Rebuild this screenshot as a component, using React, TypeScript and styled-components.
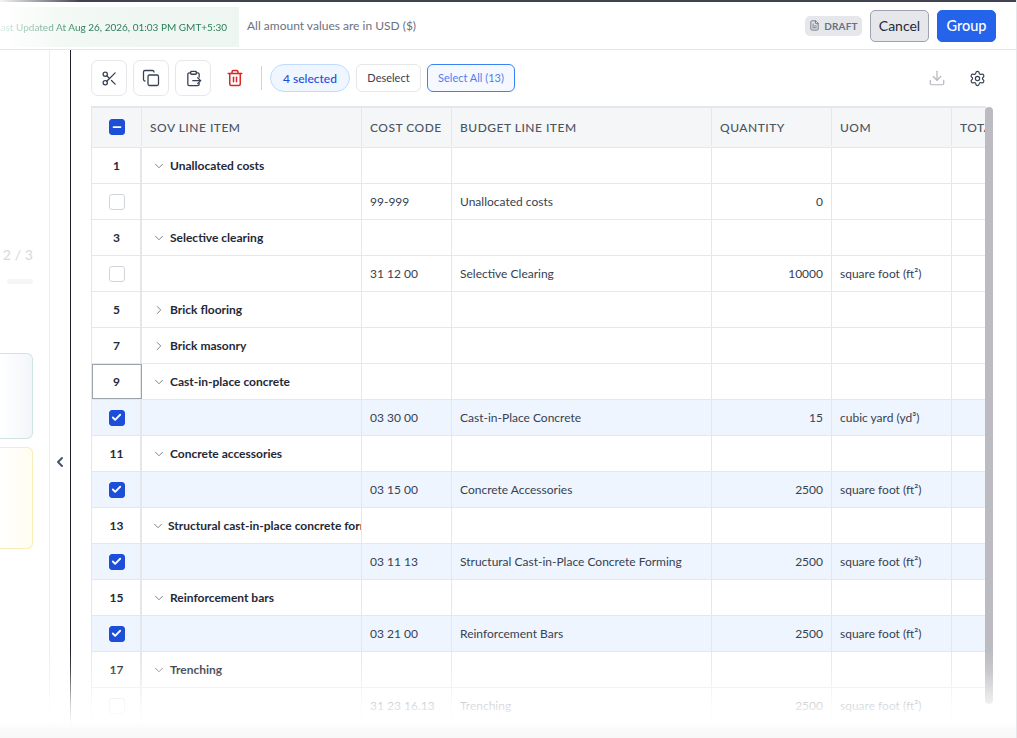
import React from "react";
import styled, { createGlobalStyle } from "styled-components";
import { Scissors, Copy, Trash2, Download, Settings, FileText, ChevronDown, ChevronRight, ChevronLeft, Check, Minus } from "lucide-react";

const Global = createGlobalStyle`
  html, body { margin: 0; padding: 0; background: #fff; }
  body { font-family: Lato, "Liberation Sans", sans-serif; overflow: hidden; }
  * { box-sizing: border-box; }
`;

const Page = styled.div`
  position: relative;
  width: 1017px;
  height: 738px;
  display: flex;
  flex-direction: column;
  overflow: hidden;
  border-right: 1px solid #e5e7eb;
  background: #fff;
`;
const TopStripe = styled.div`
  height: 2px;
  flex: none;
  background: linear-gradient(90deg, #f3f4f6 0, #9a9ca3 40px, #3f4350 80px, #3f4350 100%);
`;
const TopBar = styled.header`
  height: 48px;
  flex: none;
  display: flex;
  align-items: center;
  padding-right: 20px;
  border-bottom: 1px solid #e5e7eb;
`;
const Banner = styled.div`
  width: 239px;
  height: 40px;
  margin-top: 2px;
  display: flex;
  align-items: center;
  justify-content: flex-end;
  padding-right: 12px;
  white-space: nowrap;
  overflow: hidden;
  font-size: 10px;
  color: #2a7f5a;
  background: linear-gradient(90deg, #ffffff 0, #f2f8f4 70px, #eef6f1 100%);
`;
const BannerText = styled.span`
  -webkit-mask-image: linear-gradient(90deg, rgba(0,0,0,.1) 0, rgba(0,0,0,.55) 50px, #000 90px);
  mask-image: linear-gradient(90deg, rgba(0,0,0,.1) 0, rgba(0,0,0,.55) 50px, #000 90px);
`;
const Note = styled.span`
  margin-left: 8px;
  font-size: 12px;
  color: #6b7280;
`;
const Spacer = styled.div`
  flex: 1;
`;
const DraftBadge = styled.span`
  display: flex;
  align-items: center;
  gap: 4px;
  height: 20px;
  width: 57px;
  justify-content: center;
  border-radius: 5px;
  background: #e5e7eb;
  color: #6b7280;
  font-size: 10px;
  font-weight: 700;
  letter-spacing: 0.2px;
`;
const ActionButton = styled.button<{ $primary?: boolean }>`
  width: 59px;
  height: 32px;
  margin-left: 8px;
  border-radius: 5px;
  font-family: Lato, sans-serif;
  font-size: ${(p) => (p.$primary ? "14.5px" : "14px")};
  font-weight: ${(p) => (p.$primary ? 500 : 400)};
  color: ${(p) => (p.$primary ? "#fff" : "#1f2937")};
  background: ${(p) => (p.$primary ? "#2563eb" : "#e5e7eb")};
  border: 1px solid ${(p) => (p.$primary ? "#2563eb" : "#9ca3af")};
  padding: 0;
`;
const Body = styled.div`
  flex: 1;
  min-height: 0;
  display: flex;
`;
const LeftPane = styled.aside`
  width: 50px;
  flex: none;
  border-right: 1px solid #eceef2;
  display: flex;
  flex-direction: column;
  align-items: flex-end;
  padding-top: 196px;
`;
const StepCount = styled.div`
  margin-right: 16px;
  font-size: 14px;
  letter-spacing: 0.1px;
  color: #d6d9de;
  text-align: right;
  white-space: nowrap;
`;
const StepHint = styled.div`
  width: 26px;
  height: 5px;
  margin: 16px 16px 0 0;
  background: #f4f5f6;
  border-radius: 2px;
`;
const SideCard = styled.div<{ $tone: string; $fill: string; $h: number; $mt: number }>`
  width: 34px;
  height: ${(p) => p.$h}px;
  margin: ${(p) => p.$mt}px 16px 0 0;
  border: 1px solid ${(p) => p.$tone};
  border-left: none;
  border-radius: 0 6px 6px 0;
  background: linear-gradient(90deg, #fff 0, ${(p) => p.$fill} 100%);
`;
const Gutter = styled.div`
  width: 20px;
  flex: none;
  display: flex;
  align-items: center;
  justify-content: center;
  color: #475569;
  padding-top: 135px;
`;
const Main = styled.main`
  flex: 1;
  min-width: 0;
  border-left: 1px solid #1f2128;
  padding: 10px 21px 0 20px;
  display: flex;
  flex-direction: column;
`;
const Toolbar = styled.div`
  height: 36px;
  flex: none;
  display: flex;
  align-items: center;
  gap: 6px;
  margin-bottom: 10px;
`;
const IconButton = styled.button<{ $plain?: boolean }>`
  width: 36px;
  height: 36px;
  padding: 0;
  display: flex;
  align-items: center;
  justify-content: center;
  background: #fff;
  color: ${(p) => (p.$plain ? "#dc2626" : "#374151")};
  border: 1px solid ${(p) => (p.$plain ? "transparent" : "#e5e7eb")};
  border-radius: 7px;
`;
const Divider = styled.div`
  width: 1px;
  height: 24px;
  margin: 0 2px 0 2px;
  background: #d1d5db;
`;
const SelectedPill = styled.span`
  width: 80px;
  height: 28px;
  display: flex;
  align-items: center;
  justify-content: center;
  border-radius: 14px;
  background: #eff6ff;
  border: 1px solid #bfdbfe;
  color: #1d4ed8;
  font-size: 12px;
  font-weight: 500;
`;
const SmallButton = styled.button<{ $active?: boolean }>`
  height: 28px;
  padding: 0 0 1px;
  width: ${(p) => (p.$active ? "88px" : "65px")};
  border-radius: 6px;
  background: ${(p) => (p.$active ? "#f5f9ff" : "#fff")};
  border: 1px solid ${(p) => (p.$active ? "#3b82f6" : "#e5e7eb")};
  color: ${(p) => (p.$active ? "#4f7df0" : "#374151")};
  font-family: Lato, sans-serif;
  font-size: 11px;
`;
const ToolEnd = styled.div`
  margin-left: auto;
  display: flex;
  align-items: center;
  gap: 23px;
  padding-right: 9px;
  color: #b4b7bd;
`;
const SettingsIcon = styled(Settings)`
  color: #374151;
`;
const TableFrame = styled.div`
  position: relative;
  flex: 1;
  min-height: 0;
  width: 903px;
  overflow: hidden;
`;
const Grid = styled.div`
  width: 895px;
  border-top: 2px solid #e5e7eb;
  border-left: 1px solid #e5e7eb;
  overflow: hidden;
`;
const Row = styled.div<{ $head?: boolean; $sel?: boolean }>`
  display: grid;
  grid-template-columns: 50px 220px 90px 260px 120px 120px 100px;
  height: ${(p) => (p.$head ? "40px" : "36px")};
  padding-bottom: ${(p) => (p.$head ? "1px" : "0")};
  border-bottom: 1px solid #e5e7eb;
  background: ${(p) => (p.$head ? "#f5f6f8" : p.$sel ? "#eef5fe" : "#fff")};
`;
const Cell = styled.div<{ $right?: boolean }>`
  display: flex;
  align-items: center;
  justify-content: ${(p) => (p.$right ? "flex-end" : "flex-start")};
  padding: 0 8px;
  border-right: 1px solid #e5e7eb;
  font-size: 12px;
  color: #374151;
  white-space: nowrap;
  overflow: hidden;
`;
const HeadCell = styled(Cell)`
  font-size: 12px;
  font-weight: 500;
  letter-spacing: 0.5px;
  color: #4b5563;
`;
const NumCell = styled.div<{ $focus?: boolean; $head?: boolean }>`
  display: flex;
  align-items: center;
  justify-content: center;
  padding-left: ${(p) => (p.$head ? "0" : "1px")};
  border-right: ${(p) => (p.$head ? "1px" : "2px")} solid #e5e7eb;
  font-size: 12px;
  font-weight: 700;
  color: #1f2937;
  outline: ${(p) => (p.$focus ? "1px solid #9ca3af" : "none")};
  outline-offset: -1px;
`;
const GroupLabel = styled.div<{ $tight?: boolean }>`
  display: flex;
  align-items: center;
  gap: ${(p) => (p.$tight ? "3px" : "4px")};
  margin-left: ${(p) => (p.$tight ? "1px" : "2px")};
  font-weight: 700;
  color: #1f2937;
  svg { flex: none; color: #6b7280; }
`;
const CheckBox = styled.span<{ $on?: boolean }>`
  width: 16px;
  height: 16px;
  display: flex;
  align-items: center;
  justify-content: center;
  border-radius: 3px;
  color: #fff;
  background: ${(p) => (p.$on ? "#1d4ed8" : "#fff")};
  border: 1px solid ${(p) => (p.$on ? "#1d4ed8" : "#d1d5db")};
`;
const ScrollThumb = styled.div`
  position: absolute;
  top: 1px;
  left: 894px;
  width: 8px;
  height: 597px;
  border-radius: 4px;
  background: #bcbbc1;
`;
const BottomFade = styled.div`
  position: absolute;
  left: 0;
  right: 0;
  bottom: 0;
  height: 88px;
  pointer-events: none;
  background: linear-gradient(180deg, rgba(255,255,255,0) 0, rgba(255,255,255,.18) 20px, rgba(255,255,255,.8) 55px, rgba(255,255,255,.98) 72px, #fafafa 80px, #f8f8f9 100%);
`;

const PasteOutIcon = () => (
  <svg width="17" height="17" viewBox="0 0 24 24" fill="none" stroke="currentColor" strokeWidth="1.8" strokeLinecap="round" strokeLinejoin="round">
    <rect x="8" y="2" width="8" height="4" rx="1" />
    <path d="M16 4h2a2 2 0 0 1 2 2v4" />
    <path d="M8 4H6a2 2 0 0 0-2 2v14a2 2 0 0 0 2 2h12a2 2 0 0 0 2-2v-1" />
    <path d="M11 15h11" />
    <path d="m18 11 4 4-4 4" />
  </svg>
);

type Item = { num: number; label: string; tight?: boolean; open?: boolean; focus?: boolean; detail?: { code: string; name: string; qty: string; uom?: string; sel?: boolean } };

const sq = "square foot (ft²)";
const items: Item[] = [
  { num: 1, label: "Unallocated costs", open: true, detail: { code: "99-999", name: "Unallocated costs", qty: "0" } },
  { num: 3, label: "Selective clearing", open: true, detail: { code: "31 12 00", name: "Selective Clearing", qty: "10000", uom: sq } },
  { num: 5, label: "Brick flooring" },
  { num: 7, label: "Brick masonry" },
  { num: 9, label: "Cast-in-place concrete", open: true, focus: true, detail: { code: "03 30 00", name: "Cast-in-Place Concrete", qty: "15", uom: "cubic yard (yd³)", sel: true } },
  { num: 11, label: "Concrete accessories", open: true, detail: { code: "03 15 00", name: "Concrete Accessories", qty: "2500", uom: sq, sel: true } },
  { num: 13, label: "Structural cast-in-place concrete forming", open: true, tight: true, detail: { code: "03 11 13", name: "Structural Cast-in-Place Concrete Forming", qty: "2500", uom: sq, sel: true } },
  { num: 15, label: "Reinforcement bars", open: true, detail: { code: "03 21 00", name: "Reinforcement Bars", qty: "2500", uom: sq, sel: true } },
  { num: 17, label: "Trenching", open: true, detail: { code: "31 23 16.13", name: "Trenching", qty: "2500", uom: sq } },
];

export default function App() {
  return (
    <Page>
      <Global />
      <TopStripe />
      <TopBar>
        <Banner><BannerText>Last Updated At Aug 26, 2026, 01:03 PM GMT+5:30</BannerText></Banner>
        <Note>All amount values are in USD ($)</Note>
        <Spacer />
        <DraftBadge><FileText size={11} />DRAFT</DraftBadge>
        <ActionButton>Cancel</ActionButton>
        <ActionButton $primary>Group</ActionButton>
      </TopBar>
      <Body>
        <LeftPane>
          <StepCount>2 / 3</StepCount>
          <StepHint />
          <SideCard $tone="#cfe5e4" $fill="#f3f6f9" $h={86} $mt={69} />
          <SideCard $tone="#f8ecb8" $fill="#fffdf0" $h={102} $mt={8} />
        </LeftPane>
        <Gutter><ChevronLeft size={16} strokeWidth={3} /></Gutter>
        <Main>
          <Toolbar>
            <IconButton aria-label="Cut"><Scissors size={17} strokeWidth={1.8} /></IconButton>
            <IconButton aria-label="Copy"><Copy size={18} strokeWidth={1.7} /></IconButton>
            <IconButton aria-label="Paste"><PasteOutIcon /></IconButton>
            <IconButton $plain aria-label="Delete"><Trash2 size={18} strokeWidth={2} /></IconButton>
            <Divider />
            <SelectedPill>4 selected</SelectedPill>
            <SmallButton>Deselect</SmallButton>
            <SmallButton $active>Select All (13)</SmallButton>
            <ToolEnd>
              <Download size={18} strokeWidth={1.6} />
              <SettingsIcon size={17} strokeWidth={1.7} />
            </ToolEnd>
          </Toolbar>
          <TableFrame>
            <Grid>
              <Row $head>
                <NumCell $head><CheckBox $on><Minus size={12} strokeWidth={3.5} /></CheckBox></NumCell>
                <HeadCell>SOV LINE ITEM</HeadCell>
                <HeadCell>COST CODE</HeadCell>
                <HeadCell>BUDGET LINE ITEM</HeadCell>
                <HeadCell>QUANTITY</HeadCell>
                <HeadCell>UOM</HeadCell>
                <HeadCell>TOTAL</HeadCell>
              </Row>
              {items.map((it) => (
                <React.Fragment key={it.num}>
                  <Row>
                    <NumCell $focus={it.focus}>{it.num}</NumCell>
                    <Cell>
                      <GroupLabel $tight={it.tight}>
                        {it.open ? <ChevronDown size={14} strokeWidth={1.5} /> : <ChevronRight size={14} strokeWidth={1.5} />}
                        {it.label}
                      </GroupLabel>
                    </Cell>
                    <Cell /><Cell /><Cell /><Cell /><Cell />
                  </Row>
                  {it.detail && (
                    <Row $sel={it.detail.sel}>
                      <NumCell>
                        <CheckBox $on={it.detail.sel}>{it.detail.sel && <Check size={11} strokeWidth={4} />}</CheckBox>
                      </NumCell>
                      <Cell />
                      <Cell>{it.detail.code}</Cell>
                      <Cell>{it.detail.name}</Cell>
                      <Cell $right>{it.detail.qty}</Cell>
                      <Cell>{it.detail.uom}</Cell>
                      <Cell />
                    </Row>
                  )}
                </React.Fragment>
              ))}
            </Grid>
            <ScrollThumb />
          </TableFrame>
        </Main>
      </Body>
      <BottomFade />
    </Page>
  );
}
